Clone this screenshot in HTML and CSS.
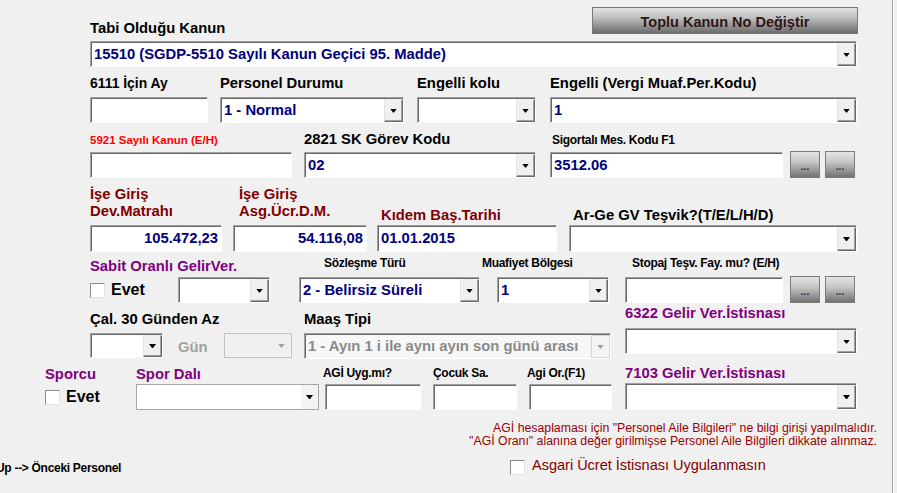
FILE: index.html
```html
<!DOCTYPE html>
<html lang="tr">
<head>
<meta charset="utf-8">
<title>Personel Bilgileri</title>
<link rel="stylesheet" href="styles.css">
</head>
<body>
<div class="form">
  <div class="hdr">
    <span class="lbl l-tabi">Tabi Olduğu Kanun</span>
    <button class="gbtn" type="button">Toplu Kanun No Değiştir</button>
  </div>
  <div class="crow r1c">
    <div class="combo f-kanun"><span class="val">15510 (SGDP-5510 Sayılı Kanun Geçici 95. Madde)</span><span class="dd"></span></div>
  </div>

  <div class="lrow r2l">
    <span class="lbl s13 l-ay">6111 İçin Ay</span>
    <span class="lbl l-durum">Personel Durumu</span>
    <span class="lbl l-kolu">Engelli kolu</span>
    <span class="lbl">Engelli (Vergi Muaf.Per.Kodu)</span>
  </div>
  <div class="crow r2c">
    <div class="tb f-ay"></div>
    <div class="combo f-durum"><span class="val">1 - Normal</span><span class="dd"></span></div>
    <div class="combo f-kolu"><span class="val"></span><span class="dd"></span></div>
    <div class="combo f-engelli"><span class="val">1</span><span class="dd"></span></div>
  </div>

  <div class="lrow r3l">
    <span class="lbl red l-5921">5921 Sayılı Kanun (E/H)</span>
    <span class="lbl l-2821">2821 SK Görev Kodu</span>
    <span class="lbl sm">Sigortalı Mes. Kodu F1</span>
  </div>
  <div class="crow r3c">
    <div class="tb f-5921"></div>
    <div class="combo f-2821"><span class="val">02</span><span class="dd"></span></div>
    <div class="tb f-mes">3512.06</div>
    <button class="sbtn" type="button">...</button>
    <button class="sbtn" type="button">...</button>
  </div>

  <div class="lrow r4l">
    <span class="lbl maroon two l-dev">İşe Giriş<br>Dev.Matrahı</span>
    <span class="lbl maroon two l-asg">İşe Giriş<br>Asg.Ücr.D.M.</span>
    <span class="lbl maroon l-kidem">Kıdem Baş.Tarihi</span>
    <span class="lbl">Ar-Ge GV Teşvik?(T/E/L/H/D)</span>
  </div>
  <div class="crow r4c">
    <div class="tb num f-dev">105.472,23</div>
    <div class="tb num f-asg">54.116,08</div>
    <div class="tb f-kidem">01.01.2015</div>
    <div class="combo f-arge"><span class="val"></span><span class="dd"></span></div>
  </div>

  <div class="lrow r5l">
    <span class="lbl purple l-sabit">Sabit Oranlı GelirVer.</span>
    <span class="lbl sm l-sozl">Sözleşme Türü</span>
    <span class="lbl sm l-muaf">Muafiyet Bölgesi</span>
    <span class="lbl sm">Stopaj Teşv. Fay. mu? (E/H)</span>
  </div>
  <div class="crow r5c">
    <label class="chkgrp f-sabitchk"><span class="chk"></span><span class="evet">Evet</span></label>
    <div class="combo f-sabit"><span class="val"></span><span class="dd"></span></div>
    <div class="combo f-sozl"><span class="val">2 - Belirsiz Süreli</span><span class="dd"></span></div>
    <div class="combo f-muaf"><span class="val">1</span><span class="dd"></span></div>
    <div class="tb f-stopaj"></div>
    <button class="sbtn" type="button">...</button>
    <button class="sbtn" type="button">...</button>
  </div>

  <div class="lrow r6l">
    <span class="lbl l-cal">Çal. 30 Günden Az</span>
    <span class="lbl l-maas">Maaş Tipi</span>
    <span class="lbl purple l-6322">6322 Gelir Ver.İstisnası</span>
  </div>
  <div class="crow r6c">
    <div class="combo f-cal"><span class="val"></span><span class="dd"></span></div>
    <span class="gun">Gün</span>
    <div class="combo dis f-gun"><span class="val"></span><span class="dd"></span></div>
    <div class="combo maas f-maas"><span class="val">1 - Ayın 1 i ile aynı ayın son günü arası</span><span class="dd"></span></div>
    <div class="combo f-6322"><span class="val"></span><span class="dd"></span></div>
  </div>

  <div class="lrow r7l">
    <span class="lbl purple l-sporcu">Sporcu</span>
    <span class="lbl purple l-spor">Spor Dalı</span>
    <span class="lbl sm l-agi">AGİ Uyg.mı?</span>
    <span class="lbl sm l-cocuk">Çocuk Sa.</span>
    <span class="lbl sm l-agior">Agi Or.(F1)</span>
    <span class="lbl purple l-7103">7103 Gelir Ver.İstisnası</span>
  </div>
  <div class="crow r7c">
    <label class="chkgrp f-sporchk"><span class="chk"></span><span class="evet">Evet</span></label>
    <div class="combo flat f-spor"><span class="val"></span><span class="dd"></span></div>
    <div class="tb f-agi"></div>
    <div class="tb f-cocuk"></div>
    <div class="tb f-agior"></div>
    <div class="combo f-7103"><span class="val"></span><span class="dd"></span></div>
  </div>

  <div class="notes">
    <div>AGİ hesaplaması için "Personel Aile Bilgileri" ne bilgi girişi yapılmalıdır.</div>
    <div>"AGİ Oranı" alanına değer girilmişse Personel Aile Bilgileri dikkate alınmaz.</div>
  </div>

  <div class="footer">
    <span class="prev">Up --&gt; Önceki Personel</span>
    <label class="asgari"><span class="chk"></span><span class="asgari-txt">Asgari Ücret İstisnası Uygulanmasın</span></label>
  </div>
</div>
</body>
</html>
```

FILE: styles.css
```css
* { box-sizing: border-box; }
html, body { margin: 0; padding: 0; overflow: hidden; }
body {
  width: 897px;
  height: 493px;
  background: #f0f0f0;
  font-family: "Liberation Sans", Arial, sans-serif;
}
.form {
  width: 893px;
  height: 493px;
  border-right: 1px solid #a0a0a0;
  box-shadow: 1px 0 0 #ffffff;
}

/* labels */
.lbl {
  flex: none;
  font-weight: bold;
  font-size: 14.8px;
  line-height: 16px;
  color: #000;
  white-space: nowrap;
}
.lbl.s13 { font-size: 13.9px; }
.lbl.sm { font-size: 12px; line-height: 14px; letter-spacing: -0.3px; }
.lbl.red { color: #ff0000; font-size: 11.5px; line-height: 14px; }
.maroon { color: #800000; }
.purple { color: #800080; }
.lbl.two { line-height: 17px; }

/* header */
.hdr { display: flex; align-items: flex-start; height: 41px; padding-left: 90px; }
.l-tabi { margin-top: 20px; }
.gbtn {
  margin: 7px 34px 0 auto;
  width: 266px;
  height: 27px;
  padding: 2px 0 0;
  border: 1px solid #7a7a7a;
  background: linear-gradient(#e2e2e2, #c4c4c4 35%, #6c6c6c);
  font-family: "Liberation Sans", Arial, sans-serif;
  font-weight: bold;
  font-size: 14.5px;
  line-height: 16px;
  color: #2e1616;
}

/* rows */
.lrow { display: flex; align-items: flex-end; padding-left: 90px; }
.crow { display: flex; align-items: flex-start; padding-left: 90px; }
.r1c { height: 26px; }
.r2l { height: 24px; }
.r2c { margin-top: 6px; height: 26px; }
.r3l { height: 24px; }
.r3c { margin-top: 5px; height: 26px; }
.r4l { height: 45px; }
.r4c { margin-top: 2px; height: 27px; }
.r5l { height: 22px; }
.r5c { margin-top: 3px; height: 26px; }
.r6l { height: 24px; }
.r6c { margin-top: 6px; height: 26px; }
.r7l { height: 23px; padding-left: 45px; }
.r7c { margin-top: 2px; height: 26px; padding-left: 45px; }

/* controls */
.tb, .combo {
  flex: none;
  height: 26px;
  background: #fff;
  border: 1px solid;
  border-color: #a0a0a0 #ffffff #ffffff #a0a0a0;
  box-shadow: inset 1px 1px 0 #696969;
}
.tb {
  padding: 1px 3px 0 3px;
  font-weight: bold;
  font-size: 14.8px;
  line-height: 22px;
  color: #000080;
  white-space: nowrap;
}
.tb.num { text-align: right; }
.r4c .tb, .r4c .combo { height: 27px; }
.combo { display: flex; }
.combo .val {
  flex: 1;
  min-width: 0;
  overflow: hidden;
  white-space: nowrap;
  padding: 1px 0 0 3px;
  font-weight: bold;
  font-size: 14.8px;
  line-height: 22px;
  color: #000080;
}
.combo .dd {
  flex: none;
  width: 19px;
  margin-top: 1px;
  border: 1px solid;
  border-color: #f4f4f4 #696969 #696969 #e3e3e3;
  box-shadow: inset -1px -1px 0 #a0a0a0;
  background: #f0f0f0;
  display: flex;
  align-items: center;
  justify-content: center;
}
.combo .dd::after {
  content: "";
  width: 7px;
  height: 4px;
  background: #000;
  clip-path: polygon(0 0, 7px 0, 4px 4px, 3px 4px);
}
.combo.dis {
  background: #f0f0f0;
  border: 1px solid #c2c2c2;
  box-shadow: none;
}
.combo.dis .dd { border: none; box-shadow: none; background: transparent; margin: 0; }
.combo.dis .dd::after { background: #a0a0a0; }
.combo.maas { background: #f7f7f7; }
.combo.maas .val { color: #8a8a8a; }
.combo.maas .dd { border-color: #d6d6d6; box-shadow: none; background: #f4f4f4; }
.combo.maas .dd::after { background: #a0a0a0; }
.combo.flat { border: 1px solid #a8a8a8; box-shadow: none; }
.combo.flat .dd { border: none; box-shadow: none; background: #f3f3f3; margin: 0; width: 17px; }

.sbtn {
  flex: none;
  width: 30px;
  height: 27px;
  margin: -1px 0 0 5px;
  padding: 0 0 5px;
  border: 1px solid #7d7d7d;
  background: linear-gradient(#e4e4e4, #c6c6c6 40%, #727272);
  font-family: "Liberation Sans", Arial, sans-serif;
  font-weight: bold;
  font-size: 10px;
  line-height: 10px;
  color: #2a2a3a;
  display: flex;
  align-items: flex-end;
  justify-content: center;
}
.tb + .sbtn { margin-left: 7px; }

.chkgrp { flex: none; display: flex; align-items: center; height: 26px; }
.chk {
  flex: none;
  width: 15px;
  height: 15px;
  background: #fff;
  border: 1px solid;
  border-color: #8a8a8a #e3e3e3 #e3e3e3 #8a8a8a;
}
.evet {
  margin-left: 6px;
  font-weight: bold;
  font-size: 16px;
  line-height: 18px;
  color: #000;
}
.gun {
  flex: none;
  width: 46px;
  margin: 6px 0 0 15px;
  font-weight: bold;
  font-size: 14.8px;
  line-height: 16px;
  color: #a0a0a0;
}

/* field sizes */
.f-kanun { width: 767px; }
.l-ay { width: 130px; }
.l-durum { width: 197px; }
.l-kolu { width: 133px; }
.f-ay { width: 118px; }
.f-durum { width: 184px; margin-left: 12px; }
.f-kolu { width: 119px; margin-left: 13px; }
.f-engelli { width: 307px; margin-left: 14px; }

.l-5921 { width: 214px; }
.l-2821 { width: 248px; }
.f-5921 { width: 202px; }
.f-2821 { width: 232px; margin-left: 12px; }
.f-mes { width: 233px; margin-left: 14px; }

.l-dev { width: 149px; margin-bottom: 3px; }
.l-asg { width: 142px; margin-bottom: 3px; }
.l-kidem { width: 192px; }
.f-dev { width: 132px; }
.f-asg { width: 134px; margin-left: 11px; }
.f-kidem { width: 180px; margin-left: 10px; }
.f-arge { width: 288px; margin-left: 12px; }

.l-sabit { width: 234px; }
.l-sozl { width: 158px; }
.l-muaf { width: 150px; }
.r5l .sm { margin-bottom: 4px; }
.f-sabitchk { width: 88px; }
.f-sabit { width: 92px; }
.f-sozl { width: 181px; margin-left: 29px; }
.f-muaf { width: 112px; margin-left: 17px; }
.f-stopaj { width: 158px; margin-left: 16px; }

.l-cal { width: 214px; }
.l-maas { width: 321px; }
.l-6322 { margin-bottom: 6px; }
.f-cal { width: 73px; height: 25px; }
.f-gun { width: 68px; height: 25px; }
.f-maas { width: 307px; margin-left: 12px; }
.f-6322 { width: 232px; margin: -5px 0 0 14px; }

.l-sporcu { width: 91px; }
.l-spor { width: 187px; }
.l-agi { width: 110px; }
.l-cocuk { width: 94px; }
.l-agior { width: 98px; }
.r7l .sm { margin-bottom: 2px; }
.l-7103 { margin-bottom: 1px; }
.f-sporchk { width: 91px; }
.f-spor { width: 183px; }
.f-agi { width: 96px; margin-left: 6px; }
.f-cocuk { width: 84px; margin-left: 12px; }
.f-agior { width: 83px; margin-left: 12px; }
.f-7103 { width: 232px; height: 27px; margin: -1px 0 0 13px; }

/* notes + footer */
.notes {
  margin-top: 12px;
  padding-right: 15px;
  text-align: right;
  font-size: 12.3px;
  line-height: 12.5px;
  color: #9c0000;
  white-space: nowrap;
}
.footer { display: flex; align-items: flex-start; margin-top: 10px; }
.prev {
  flex: none;
  width: 514px;
  margin: 4px 0 0 -4px;
  font-weight: bold;
  font-size: 12px;
  line-height: 14px;
  letter-spacing: -0.3px;
  color: #000;
  white-space: nowrap;
}
.asgari { display: flex; align-items: flex-start; }
.asgari .chk { margin-top: 3px; }
.asgari-txt {
  margin-left: 7px;
  font-size: 14.5px;
  line-height: 16px;
  color: #800000;
  white-space: nowrap;
}
```
